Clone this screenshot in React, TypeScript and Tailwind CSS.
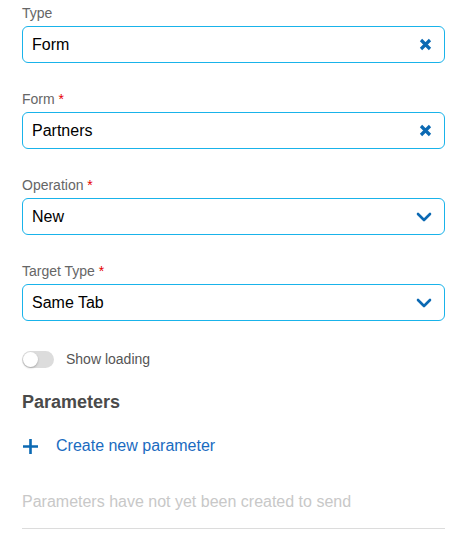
import React from 'react';

const XIcon = () => (
  <svg width="13" height="13" viewBox="0 0 13 13" className="text-[#0b69b3]">
    <path d="M2 2 L11 11 M11 2 L2 11" stroke="currentColor" strokeWidth="3.2" strokeLinecap="butt" fill="none" />
  </svg>
);

const Chevron = () => (
  <svg width="16" height="10" viewBox="0 0 16 10" className="text-[#0b69b3]">
    <polyline points="2,2 8,8 14,2" stroke="currentColor" strokeWidth="2.6" fill="none" strokeLinecap="round" strokeLinejoin="round" />
  </svg>
);

type FieldProps = { label: string; value: string; required?: boolean; kind: 'clear' | 'select'; first?: boolean };

const Field: React.FC<FieldProps> = ({ label, value, required, kind, first }) => (
  <div className={first ? 'pt-[3px]' : 'mt-[26px]'}>
    <div className="h-5 text-[14px] leading-5 text-[#666]">
      {label}
      {required && <span className="text-[#e60000]"> *</span>}
    </div>
    <div className="mt-[3px] h-[37px] rounded-[6px] border border-[#19b3ea] flex items-center pl-[9px] pr-[12px]">
      <span className="flex-1 text-[16px] text-black">{value}</span>
      {kind === 'clear' ? <XIcon /> : <Chevron />}
    </div>
  </div>
);

export default function App() {
  return (
    <div className="bg-white min-h-[533px] pl-[22px] pr-[20px] font-['Liberation_Sans',Arial,sans-serif]">
      <Field first label="Type" value="Form" kind="clear" />
      <Field label="Form" value="Partners" required kind="clear" />
      <Field label="Operation" value="New" required kind="select" />
      <Field label="Target Type" value="Same Tab" required kind="select" />

      <div className="mt-[29px] flex items-center h-[18px]">
        <div className="relative w-[32px] h-[17px] rounded-full bg-[#dcdcdc]">
          <div className="absolute left-[1px] top-[1px] w-[15px] h-[15px] rounded-full bg-white shadow-[0_1px_2px_rgba(0,0,0,0.25)]" />
        </div>
        <span className="ml-[12px] text-[14px] text-[#555]">Show loading</span>
      </div>

      <h2 className="mt-[22px] text-[18px] leading-6 font-bold text-[#4a4a4a]">Parameters</h2>

      <button className="mt-[20px] flex items-center h-6 text-[16px] text-[#1a6bbf]">
        <svg width="15" height="15" viewBox="0 0 15 15" className="ml-[1px] text-[#0b69b3]">
          <path d="M7.5 0 V15 M0 7.5 H15" stroke="currentColor" strokeWidth="2.6" fill="none" />
        </svg>
        <span className="ml-[18px]">Create new parameter</span>
      </button>

      <p className="mt-[32px] text-[16px] leading-6 text-[#c8c8c8]">Parameters have not yet been created to send</p>
      <div className="mt-[14px] border-t border-[#dcdcdc]" />
    </div>
  );
}
